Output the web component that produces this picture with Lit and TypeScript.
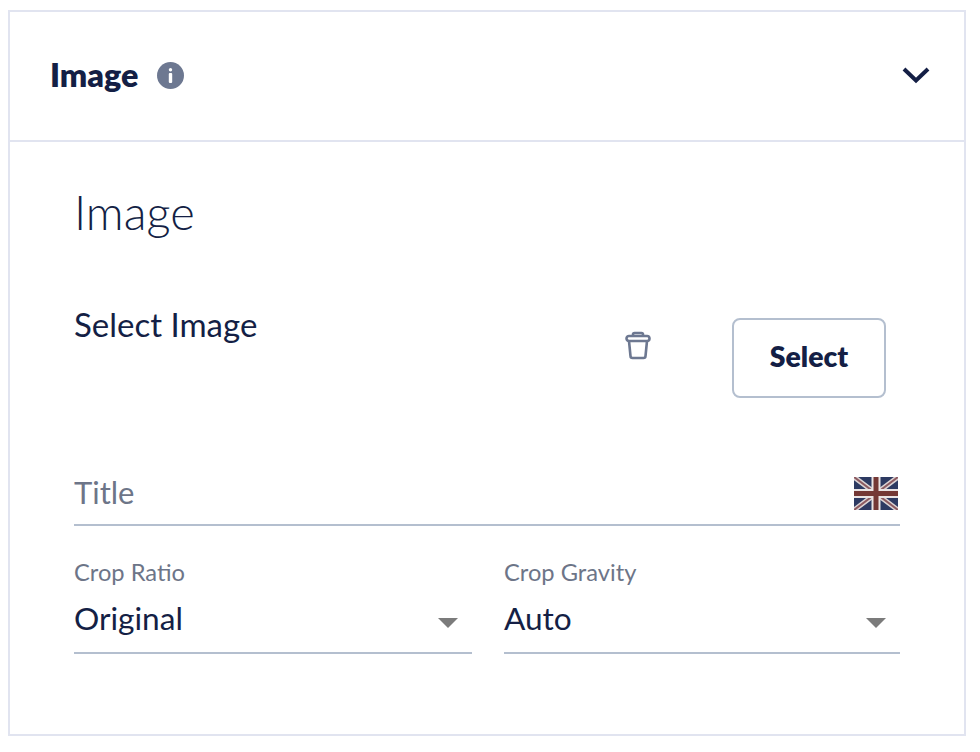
import { LitElement, html, css } from "lit";
import { customElement } from "lit/decorators.js";

@customElement("app-root")
export class AppRoot extends LitElement {
  static styles = css`
    :host {
      display: block;
      box-sizing: border-box;
      padding: 10px 14px 16px 8px;
      height: 752px;
      background: #fff;
      font-family: "Lato", "Open Sans", sans-serif;
      color: #141f45;
    }
    .card {
      box-sizing: border-box;
      height: 726px;
      border: 2px solid #e1e4f0;
    }
    .head {
      box-sizing: border-box;
      height: 130px;
      border-bottom: 2px solid #e1e4f0;
      display: flex;
      align-items: center;
      padding: 0 33px 2px 40px;
    }
    .head-title {
      font-size: 32.3px;
      font-weight: 800;
      line-height: 40px;
    }
    .info {
      width: 27px;
      height: 27px;
      margin-left: 19px;
      display: block;
    }
    .chev {
      width: 30px;
      height: 18px;
      margin-left: auto;
      display: block;
    }
    .body {
      padding: 44px 64px 0 64px;
    }
    h2 {
      margin: 0;
      font-size: 47px;
      font-weight: 300;
      line-height: 52px;
    }
    .select-row {
      display: flex;
      align-items: flex-start;
      margin-top: 66px;
    }
    .select-label {
      font-size: 33px;
      line-height: 40px;
      flex: 1;
    }
    .trash {
      width: 28px;
      height: 30px;
      margin: 27px 0 0 0;
      display: block;
    }
    .btn {
      box-sizing: border-box;
      width: 154px;
      height: 80px;
      margin: 14px 14px 0 80px;
      padding: 0 0 4px;
      border: 2px solid #b4bfcf;
      border-radius: 8px;
      background: #fff;
      color: #141f45;
      font: 800 28.4px/1 "Lato", sans-serif;
    }
    .title-field {
      margin-top: 64px;
      height: 64px;
      box-sizing: border-box;
      border-bottom: 2px solid #b4bfcf;
      display: flex;
      align-items: center;
      justify-content: space-between;
      padding: 0 2px 2px 0;
    }
    .ph {
      font-size: 31px;
      color: #6d7588;
    }
    .flag {
      width: 44px;
      height: 33px;
      display: block;
      margin-top: 2px;
      filter: blur(0.7px);
    }
    .selects {
      display: grid;
      grid-template-columns: 398px 396px;
      column-gap: 32px;
      margin-top: 32px;
    }
    .sel {
      border-bottom: 2px solid #b4bfcf;
      height: 96px;
      box-sizing: border-box;
    }
    .sel label {
      display: block;
      font-size: 23.7px;
      line-height: 32px;
      margin-top: -2px;
      color: #6d7588;
    }
    .row {
      display: flex;
      align-items: center;
      justify-content: space-between;
      padding-right: 14px;
      height: 42px;
      margin-top: 9px;
    }
    .val {
      font-size: 31.6px;
    }
    .tri {
      width: 20px;
      height: 10px;
      display: block;
      margin-top: 10px;
    }
  `;

  render() {
    return html`
      <div class="card">
        <div class="head">
          <span class="head-title">Image</span>
          <svg class="info" viewBox="0 0 27 27">
            <circle cx="13.5" cy="13.5" r="13.5" fill="#6d7891" />
            <rect x="11.8" y="6" width="3.4" height="3.4" rx="1.7" fill="#fff" />
            <rect x="11.8" y="11" width="3.4" height="10" rx="1" fill="#fff" />
          </svg>
          <svg class="chev" viewBox="0 0 30 18">
            <path d="M3 3l12 11.500L27 3" fill="none" stroke="#141f45" stroke-width="4" />
          </svg>
        </div>
        <div class="body">
          <h2>Image</h2>
          <div class="select-row">
            <span class="select-label">Select Image</span>
            <svg class="trash" viewBox="0 0 28 30" fill="none" stroke="#6d7891" stroke-width="2.6">
              <path d="M9 5V3.5A1.5 1.5 0 0 1 10.5 2h7A1.5 1.5 0 0 1 19 3.500V5" />
              <rect x="2.500" y="5" width="23" height="5" rx="2.500" />
              <path d="M5 10l1.500 15a2 2 0 0 0 2 2h11a2 2 0 0 0 2-2L23 10" />
            </svg>
            <button class="btn">Select</button>
          </div>
          <div class="title-field">
            <span class="ph">Title</span>
            <svg class="flag" viewBox="0 0 44 33">
              <rect width="44" height="33" fill="#2d3a62" />
              <path d="M0 0L44 33M44 0L0 33" stroke="#dcd4d4" stroke-width="5" />
              <path d="M0 0L44 33M44 0L0 33" stroke="#8c5a60" stroke-width="2" />
              <path d="M22 0V33M0 16.500H44" stroke="#eae4e4" stroke-width="9" />
              <path d="M22 0V33M0 16.500H44" stroke="#743835" stroke-width="5" />
            </svg>
          </div>
          <div class="selects">
            <div class="sel">
              <label>Crop Ratio</label>
              <div class="row">
                <span class="val">Original</span>
                <svg class="tri" viewBox="0 0 20 10"><path d="M0 0h20L10 10z" fill="#7b7b7b" /></svg>
              </div>
            </div>
            <div class="sel">
              <label>Crop Gravity</label>
              <div class="row">
                <span class="val">Auto</span>
                <svg class="tri" viewBox="0 0 20 10"><path d="M0 0h20L10 10z" fill="#7b7b7b" /></svg>
              </div>
            </div>
          </div>
        </div>
      </div>
    `;
  }
}
